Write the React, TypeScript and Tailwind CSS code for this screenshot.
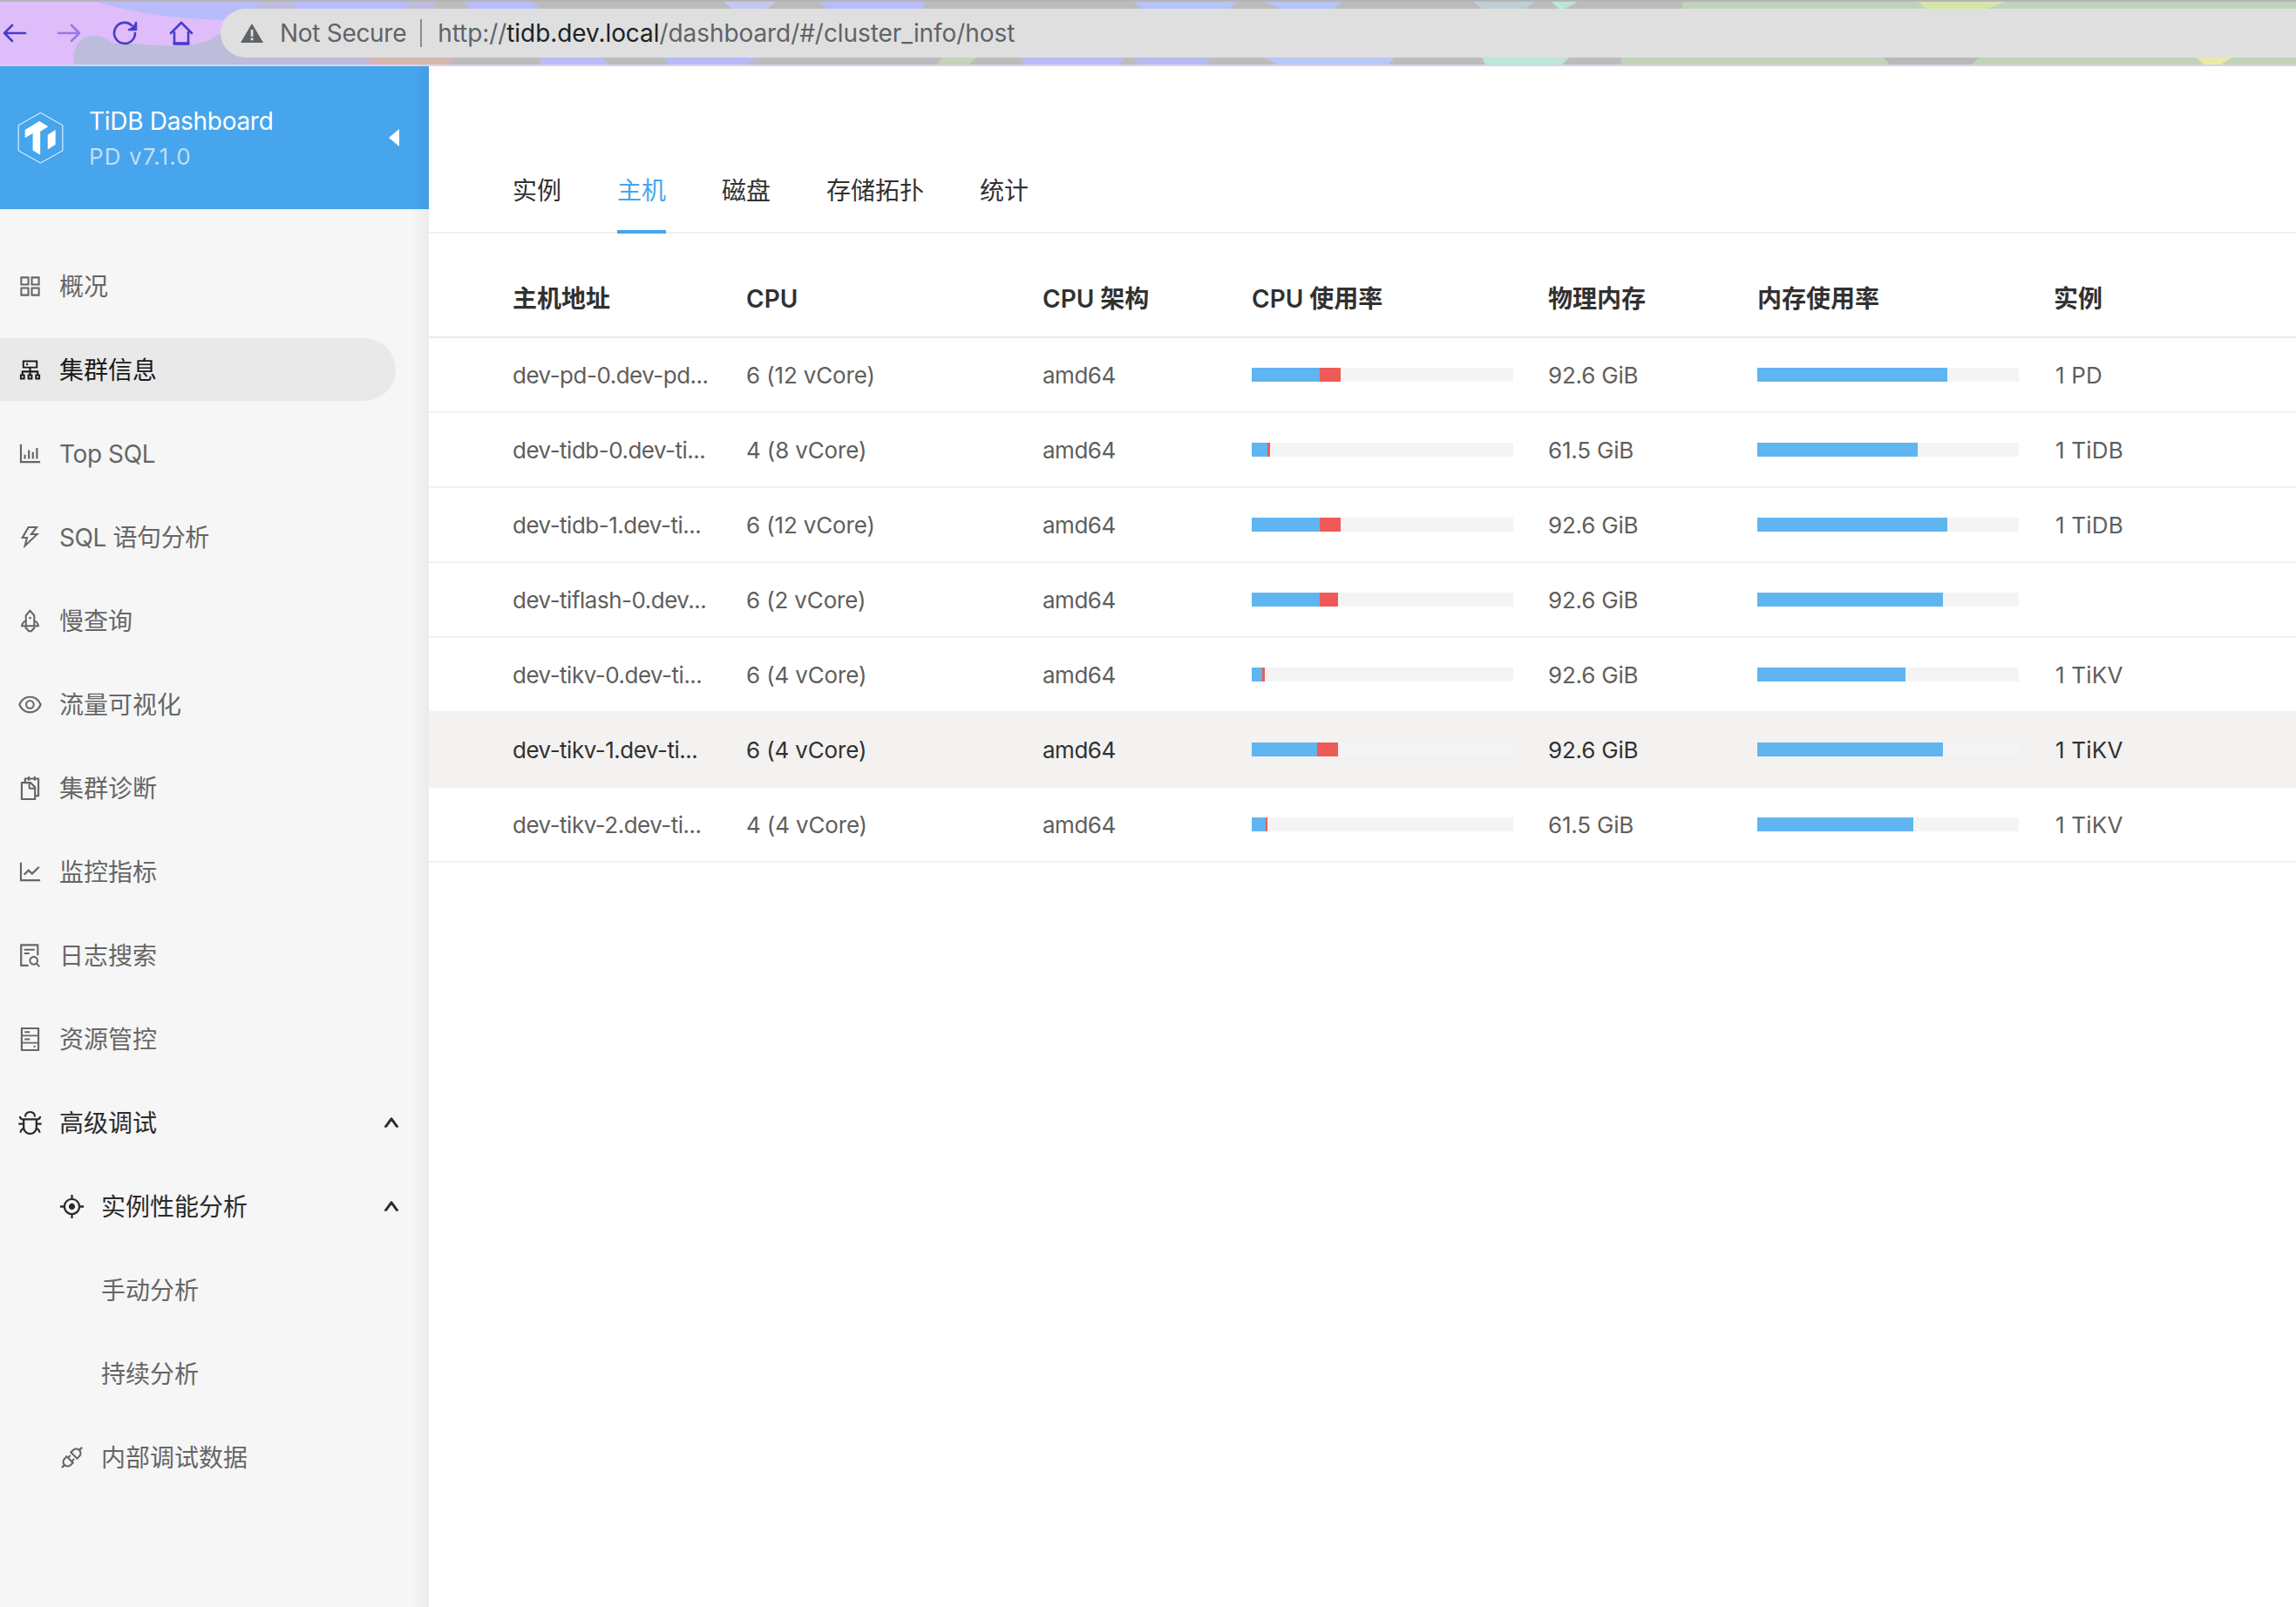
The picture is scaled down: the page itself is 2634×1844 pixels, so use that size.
import React from "react";
import {
  AiOutlineAppstore,
  AiOutlineCluster,
  AiOutlineBarChart,
  AiOutlineThunderbolt,
  AiOutlineRocket,
  AiOutlineEye,
  AiOutlineSnippets,
  AiOutlineLineChart,
  AiOutlineFileSearch,
  AiOutlineHdd,
  AiOutlineBug,
  AiOutlineAim,
  AiOutlineApi,
  AiOutlineUp,
} from "react-icons/ai";

const font = "font-['Inter','Noto_Sans_CJK_SC',sans-serif]";

function Wallpaper() {
  return (
    <svg className="absolute inset-0 w-full h-full" viewBox="0 0 2634 76" preserveAspectRatio="none">
      <rect width="2634" height="76" fill="#bcbcbc" />
      <rect x="0" width="440" height="76" fill="#dfbdfa" />
      <path d="M110 2 C170 20 240 26 320 22 L380 2 Z" fill="#b9bcfb" />
      <path d="M85 76 C80 40 110 32 130 50 C170 48 220 62 250 40 L300 2 L500 2 L500 76 Z" fill="#bdbcdc" />
      <path d="M335 2 L470 2 L455 20 L350 24 Z" fill="#b9bcfb" />
      <path d="M420 66 L520 66 L510 76 L430 76 Z" fill="#d8b6b0" />
      <path d="M532 2 L610 2 L620 10 L540 10 Z" fill="#b9bcfb" />
      <path d="M620 66 L690 66 L700 76 L620 76 Z" fill="#b9bcfb" />
      <path d="M760 66 L870 66 L850 76 L770 76 Z" fill="#b6bbf8" />
      <path d="M830 2 L890 2 L880 10 L840 10 Z" fill="#c4c8ef" />
      <path d="M940 2 L1060 2 L1060 10 L950 10 Z" fill="#b9bcfb" />
      <path d="M1080 66 L1120 66 L1110 76 L1075 76 Z" fill="#c4d3b9" />
      <path d="M1170 66 L1290 66 L1280 76 L1180 76 Z" fill="#b9bcfb" />
      <path d="M1300 2 L1420 2 L1410 10 L1310 10 Z" fill="#b6c4f8" />
      <path d="M1450 2 L1540 2 L1530 10 L1470 10 Z" fill="#b6c4f8" />
      <path d="M1300 66 L1390 66 L1380 76 L1310 76 Z" fill="#b6bbf4" />
      <path d="M1450 66 L1600 66 L1590 76 L1470 76 Z" fill="#b6c8f8" />
      <path d="M1690 2 L1760 2 L1750 10 L1700 10 Z" fill="#bdd0d6" />
      <path d="M1700 66 L1800 66 L1790 76 L1705 76 Z" fill="#bce6d6" />
      <path d="M1780 2 L1810 2 L1795 10 L1788 10 Z" fill="#bce6d6" />
      <path d="M1930 2 L2634 2 L2634 10 L1930 10 Z" fill="#c1d3bb" />
      <path d="M1860 66 L2634 66 L2634 76 L1860 76 Z" fill="#c1d3bb" />
      <path d="M2200 2 L2300 2 L2280 10 L2210 10 Z" fill="#d4e6a8" />
      <path d="M2520 66 L2560 66 L2545 76 L2530 76 Z" fill="#ece9a6" />
      <path d="M2160 66 L2270 66 L2260 76 L2170 76 Z" fill="#b8b8b8" />
      <rect width="2634" height="2" fill="#b4b4b4" />
      <rect y="74" width="2634" height="2" fill="#d9d3ec" />
    </svg>
  );
}

function ToolIcon({ children, dim }: { children: React.ReactNode; dim?: boolean }) {
  return (
    <svg
      width="30"
      height="30"
      viewBox="0 0 30 30"
      fill="none"
      stroke="#4a3ccb"
      strokeWidth="2.6"
      strokeLinecap="round"
      strokeLinejoin="round"
      opacity={dim ? 0.5 : 1}
    >
      {children}
    </svg>
  );
}

function BrowserBar() {
  return (
    <div className="relative h-[76px] shrink-0 overflow-hidden">
      <Wallpaper />
      <div className="relative flex items-center h-full pl-[1px]">
        <div className="flex items-center gap-[34px] w-[252px]">
          <ToolIcon>
            <path d="M28 15H4M13 6l-9 9 9 9" />
          </ToolIcon>
          <ToolIcon dim>
            <path d="M2 15h24M17 6l9 9-9 9" />
          </ToolIcon>
          <ToolIcon>
            <path d="M26 15a12 12 0 1 1-4-9" />
            <path d="M27 3v8h-8" fill="#4a3ccb" />
          </ToolIcon>
          <ToolIcon>
            <path d="M3 15 15 3l12 12M7 14v13h16V14" />
            <path d="M7 27h16" strokeWidth="3.4" />
          </ToolIcon>
        </div>
        <div className="flex items-center h-[56px] flex-1 bg-[#dfdfdf] rounded-l-[28px] pl-[23px]">
          <svg width="26" height="22" viewBox="0 0 26 22" className="shrink-0">
            <path d="M13 0 26 22H0Z" fill="#5f6368" />
            <rect x="11.7" y="7" width="2.8" height="8" fill="#dfdfdf" />
            <rect x="11.7" y="16.5" width="2.8" height="2.8" fill="#dfdfdf" />
          </svg>
          <span className={`${font} ml-[19px] text-[28px] text-[#5f6368] tracking-[-0.3px] whitespace-nowrap`}>Not Secure</span>
          <div className="w-[2px] h-[32px] bg-[#8e8e8e] ml-[16px] mr-[18px]" />
          <span className={`${font} text-[28px] tracking-[-0.07px] text-[#5f6368] whitespace-nowrap`}>
            http://<span className="text-[#202124]">tidb.dev.local</span>/dashboard/#/cluster_info/host
          </span>
        </div>
      </div>
    </div>
  );
}

function Logo() {
  return (
    <svg width="53" height="60" viewBox="58 376 160 182" className="shrink-0">
      <polygon points="138,380 215,424 215,512 138,555 61,512 61,424" fill="none" stroke="#fff" strokeWidth="3" />
      <polygon points="84,440 134,409 165,428 137,445 137,527 111,511 111,452 84,468" fill="#fff" />
      <polygon points="163,457 190,440 190,491 163,508" fill="#fff" />
    </svg>
  );
}

type NavItem = {
  label: string;
  Icon?: React.ComponentType<{ size?: number; className?: string }>;
  level?: 1 | 2;
  tone?: "active" | "open";
  chevron?: boolean;
  tight?: boolean;
};

const NAV: NavItem[] = [
  { label: "概况", Icon: AiOutlineAppstore },
  { label: "集群信息", Icon: AiOutlineCluster, tone: "active" },
  { label: "Top SQL", Icon: AiOutlineBarChart, tight: true },
  { label: "SQL 语句分析", Icon: AiOutlineThunderbolt, tight: true },
  { label: "慢查询", Icon: AiOutlineRocket },
  { label: "流量可视化", Icon: AiOutlineEye },
  { label: "集群诊断", Icon: AiOutlineSnippets },
  { label: "监控指标", Icon: AiOutlineLineChart },
  { label: "日志搜索", Icon: AiOutlineFileSearch },
  { label: "资源管控", Icon: AiOutlineHdd },
  { label: "高级调试", Icon: AiOutlineBug, tone: "open", chevron: true },
  { label: "实例性能分析", Icon: AiOutlineAim, level: 2, tone: "open", chevron: true },
  { label: "手动分析", level: 2 },
  { label: "持续分析", level: 2 },
  { label: "内部调试数据", Icon: AiOutlineApi, level: 2 },
];

function NavRow({ item }: { item: NavItem }) {
  const { label, Icon, level, tone, chevron, tight } = item;
  const color = tone === "active" ? "text-[#1a1a1a]" : tone === "open" ? "text-[#2b2b2b]" : "text-[#666666]";
  return (
    <div
      className={`flex items-center h-[72px] w-[454px] shrink-0 rounded-r-[36px] gap-[18px] ${
        level === 2 ? "pl-[67px]" : "pl-[19px]"
      } ${tone === "active" ? "bg-[#e9e9e9]" : ""} ${color}`}
    >
      <span className="w-[31px] flex justify-center shrink-0">{Icon ? <Icon size={31} /> : null}</span>
      <span className={`text-[28px] leading-[38px] pt-[1px] whitespace-nowrap flex-1 ${tight ? "tracking-[-0.4px]" : ""}`}>
        {label}
      </span>
      {chevron ? (
        <span className="mr-[-10px] w-[31px] flex justify-center text-[#2b2b2b]">
          <AiOutlineUp size={20} className="stroke-[70px]" />
        </span>
      ) : null}
    </div>
  );
}

function Sidebar() {
  return (
    <aside className={`${font} relative w-[492px] shrink-0 bg-[#f6f6f6] flex flex-col`}>
      <div className="h-[164px] bg-[#46a5ec] flex items-center pl-[20px] pr-[33px] shrink-0">
        <Logo />
        <div className="ml-[29px] flex-1 flex flex-col gap-[5px] pt-[3px]">
          <div className="text-[28px] tracking-[-0.3px] leading-[35px] text-white whitespace-nowrap">TiDB Dashboard</div>
          <div className="text-[26px] leading-[35px] text-[#c0def7] tracking-[1.1px] whitespace-nowrap">PD v7.1.0</div>
        </div>
        <svg width="13" height="20" viewBox="0 0 13 20" className="shrink-0">
          <path d="M12 0 0 10l12 10Z" fill="#fff" />
        </svg>
      </div>
      <nav className="flex flex-col gap-6 pt-[52px]">
        {NAV.map((item) => (
          <NavRow key={item.label} item={item} />
        ))}
      </nav>
      <div className="absolute top-0 bottom-0 right-0 w-[20px] bg-gradient-to-r from-transparent to-[rgba(0,0,0,0.045)] pointer-events-none" />
    </aside>
  );
}

const TABS = ["实例", "主机", "磁盘", "存储拓扑", "统计"];

function Tabs() {
  return (
    <div className="h-[192px] shrink-0 flex items-end gap-16 pl-[96px] border-b-2 border-[#f0efee]">
      {TABS.map((t) => (
        <div
          key={t}
          className={`h-[70px] mb-[-2px] text-[28px] leading-[42px] whitespace-nowrap border-b-4 ${
            t === "主机" ? "text-[#46a5ec] border-[#46a5ec]" : "text-[#323130] border-transparent"
          }`}
        >
          {t}
        </div>
      ))}
    </div>
  );
}

const ROWS = [
  { host: "dev-pd-0.dev-pd...", cpu: "6 (12 vCore)", mem: "92.6 GiB", inst: "1 PD", c: [78, 24], m: 218 },
  { host: "dev-tidb-0.dev-ti...", cpu: "4 (8 vCore)", mem: "61.5 GiB", inst: "1 TiDB", c: [18, 3], m: 184 },
  { host: "dev-tidb-1.dev-ti...", cpu: "6 (12 vCore)", mem: "92.6 GiB", inst: "1 TiDB", c: [78, 24], m: 218 },
  { host: "dev-tiflash-0.dev...", cpu: "6 (2 vCore)", mem: "92.6 GiB", inst: "", c: [78, 21], m: 213 },
  { host: "dev-tikv-0.dev-ti...", cpu: "6 (4 vCore)", mem: "92.6 GiB", inst: "1 TiKV", c: [12, 3], m: 170 },
  { host: "dev-tikv-1.dev-ti...", cpu: "6 (4 vCore)", mem: "92.6 GiB", inst: "1 TiKV", c: [75, 24], m: 213, hover: true },
  { host: "dev-tikv-2.dev-ti...", cpu: "4 (4 vCore)", mem: "61.5 GiB", inst: "1 TiKV", c: [16, 2], m: 179 },
];

const GRID = "grid grid-cols-[268px_340px_240px_340px_240px_340px_1fr] pl-[96px] items-center";

function Bar({ blue, red }: { blue: number; red?: number }) {
  return (
    <div className="flex w-[300px] h-4 bg-[#f4f4f4]">
      <div className="bg-[#5fb5f0]" style={{ width: blue }} />
      {red ? <div className="bg-[#ee5a58]" style={{ width: red }} /> : null}
    </div>
  );
}

function HostTable() {
  return (
    <div>
      <div className={`${GRID} h-[120px] pt-[32px] border-b-2 border-[#edebe9] text-[28px] font-semibold text-[#323130]`}>
        {["主机地址", "CPU", "CPU 架构", "CPU 使用率", "物理内存", "内存使用率", "实例"].map((h) => (
          <div key={h} className="whitespace-nowrap">{h}</div>
        ))}
      </div>
      {ROWS.map((r) => (
        <div
          key={r.host}
          className={`${GRID} h-[86px] border-b-2 border-[#f3f2f1] text-[26px] ${
            r.hover ? "bg-[#f3f2f1] text-[#323130]" : "text-[#605e5c]"
          }`}
        >
          <div className="whitespace-nowrap tracking-[-0.5px]">{r.host}</div>
          <div className="whitespace-nowrap tracking-[-0.15px]">{r.cpu}</div>
          <div className="tracking-[-0.5px]">amd64</div>
          <Bar blue={r.c[0]} red={r.c[1]} />
          <div className="whitespace-nowrap tracking-[-0.2px]">{r.mem}</div>
          <Bar blue={r.m} />
          <div className="whitespace-nowrap pl-[2px] tracking-[0.2px]">{r.inst}</div>
        </div>
      ))}
    </div>
  );
}

export default function App() {
  return (
    <div className="h-screen flex flex-col bg-white overflow-hidden">
      <BrowserBar />
      <div className="flex flex-1 min-h-0">
        <Sidebar />
        <main className={`${font} flex-1 min-w-0 flex flex-col`}>
          <Tabs />
          <HostTable />
        </main>
      </div>
    </div>
  );
}
